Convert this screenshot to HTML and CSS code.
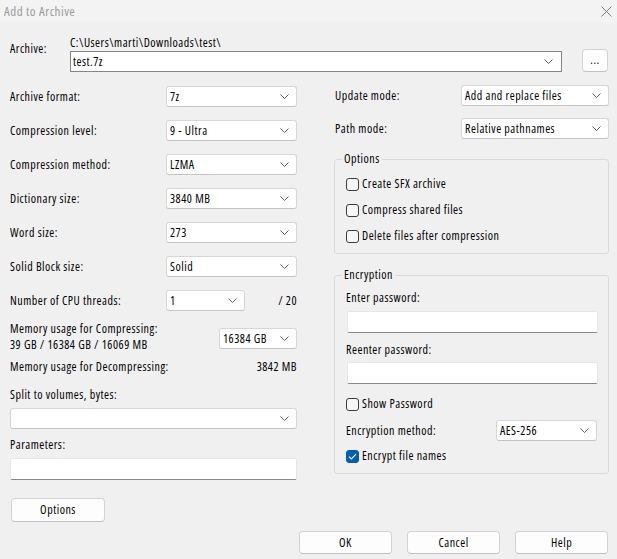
FILE: index.html
```html
<!DOCTYPE html>
<html>
<head>
<meta charset="utf-8">
<title>Add to Archive</title>
<link rel="stylesheet" href="styles.css">
</head>
<body>
<div class="titlebar">
  <span class="title">Add to Archive</span>
  <svg class="close" width="11" height="11" viewBox="0 0 11 11"><path d="M0.5 0.5 L10.5 10.5 M10.5 0.5 L0.5 10.5" stroke="#7a7a7a" stroke-width="1" fill="none"/></svg>
</div>

<div class="archive">
  <div class="archive-label">Archive:</div>
  <div class="archive-main">
    <div class="archive-path">C:\Users\marti\Downloads\test\</div>
    <div class="archive-row">
      <div class="combo combo-edit"><span>test.7z</span><svg class="chev" width="9" height="5" viewBox="0 0 9 5"><path d="M0.5 0.5 L4.5 4.5 L8.5 0.5" stroke="#5f5f5f" fill="none"/></svg></div>
      <div class="btn btn-browse">...</div>
    </div>
  </div>
</div>

<div class="columns">
  <div class="col-left">
    <div class="fields">
      <div class="field"><span>Archive format:</span><div class="combo w131"><span>7z</span><svg class="chev" width="9" height="5" viewBox="0 0 9 5"><path d="M0.5 0.5 L4.5 4.5 L8.5 0.5" stroke="#5f5f5f" fill="none"/></svg></div></div>
      <div class="field"><span>Compression level:</span><div class="combo w131"><span>9 - Ultra</span><svg class="chev" width="9" height="5" viewBox="0 0 9 5"><path d="M0.5 0.5 L4.5 4.5 L8.5 0.5" stroke="#5f5f5f" fill="none"/></svg></div></div>
      <div class="field"><span>Compression method:</span><div class="combo w131"><span>LZMA</span><svg class="chev" width="9" height="5" viewBox="0 0 9 5"><path d="M0.5 0.5 L4.5 4.5 L8.5 0.5" stroke="#5f5f5f" fill="none"/></svg></div></div>
      <div class="field"><span>Dictionary size:</span><div class="combo w131"><span>3840 MB</span><svg class="chev" width="9" height="5" viewBox="0 0 9 5"><path d="M0.5 0.5 L4.5 4.5 L8.5 0.5" stroke="#5f5f5f" fill="none"/></svg></div></div>
      <div class="field"><span>Word size:</span><div class="combo w131"><span>273</span><svg class="chev" width="9" height="5" viewBox="0 0 9 5"><path d="M0.5 0.5 L4.5 4.5 L8.5 0.5" stroke="#5f5f5f" fill="none"/></svg></div></div>
      <div class="field"><span>Solid Block size:</span><div class="combo w131"><span>Solid</span><svg class="chev" width="9" height="5" viewBox="0 0 9 5"><path d="M0.5 0.5 L4.5 4.5 L8.5 0.5" stroke="#5f5f5f" fill="none"/></svg></div></div>
      <div class="field"><span class="cpu-label">Number of CPU threads:</span><div class="combo w79"><span>1</span><svg class="chev" width="9" height="5" viewBox="0 0 9 5"><path d="M0.5 0.5 L4.5 4.5 L8.5 0.5" stroke="#5f5f5f" fill="none"/></svg></div><span class="cpu-total">/ 20</span></div>
    </div>

    <div class="mem">
      <div class="mem-text">Memory usage for Compressing:<br>39 GB / 16384 GB / 16069 MB</div>
      <div class="combo w78 mem-combo"><span>16384 GB</span><svg class="chev" width="9" height="5" viewBox="0 0 9 5"><path d="M0.5 0.5 L4.5 4.5 L8.5 0.5" stroke="#5f5f5f" fill="none"/></svg></div>
    </div>
    <div class="decomp"><span>Memory usage for Decompressing:</span><span>3842 MB</span></div>

    <div class="label split-label">Split to volumes, bytes:</div>
    <div class="combo full split-combo"><span></span><svg class="chev" width="9" height="5" viewBox="0 0 9 5"><path d="M0.5 0.5 L4.5 4.5 L8.5 0.5" stroke="#5f5f5f" fill="none"/></svg></div>

    <div class="label params-label">Parameters:</div>
    <div class="textbox params-input"></div>

    <div class="btn btn-options">Options</div>
  </div>

  <div class="col-right">
    <div class="rfield"><span>Update mode:</span><div class="combo w148"><span>Add and replace files</span><svg class="chev" width="9" height="5" viewBox="0 0 9 5"><path d="M0.5 0.5 L4.5 4.5 L8.5 0.5" stroke="#5f5f5f" fill="none"/></svg></div></div>
    <div class="rfield path-field"><span>Path mode:</span><div class="combo w148"><span>Relative pathnames</span><svg class="chev" width="9" height="5" viewBox="0 0 9 5"><path d="M0.5 0.5 L4.5 4.5 L8.5 0.5" stroke="#5f5f5f" fill="none"/></svg></div></div>

    <fieldset class="group group-options">
      <legend>Options</legend>
      <div class="group-body options-body">
        <div class="check"><span class="box"></span><span>Create SFX archive</span></div>
        <div class="check"><span class="box"></span><span>Compress shared files</span></div>
        <div class="check"><span class="box"></span><span>Delete files after compression</span></div>
      </div>
    </fieldset>

    <fieldset class="group group-enc">
      <legend>Encryption</legend>
      <div class="group-body enc-body">
        <div class="label">Enter password:</div>
        <div class="textbox pw-input pw1"></div>
        <div class="label reenter-label">Reenter password:</div>
        <div class="textbox pw-input pw2"></div>
        <div class="check show-pw"><span class="box"></span><span>Show Password</span></div>
        <div class="encm"><span>Encryption method:</span><div class="combo w101"><span>AES-256</span><svg class="chev" width="9" height="5" viewBox="0 0 9 5"><path d="M0.5 0.5 L4.5 4.5 L8.5 0.5" stroke="#5f5f5f" fill="none"/></svg></div></div>
        <div class="check enc-names"><span class="box checked"><svg width="9" height="7" viewBox="0 0 9 7"><path d="M1 3.6 L3.4 6 L8 1.2" stroke="#ffffff" stroke-width="1.1" fill="none"/></svg></span><span>Encrypt file names</span></div>
      </div>
    </fieldset>
  </div>
</div>

<div class="footer">
  <div class="btn btn-foot">OK</div>
  <div class="btn btn-foot">Cancel</div>
  <div class="btn btn-foot">Help</div>
</div>
</body>
</html>
```

FILE: styles.css
```css
* { box-sizing: border-box; }
html, body { margin: 0; padding: 0; }
body {
  width: 617px;
  height: 559px;
  overflow: hidden;
  background: #f0f0f0;
  color: #000;
  font-family: "Open Sans", "Liberation Sans", Arial, sans-serif;
  font-size: 12px;
  font-stretch: 75%;
  letter-spacing: 0.5px;
  line-height: 16px;
}

.titlebar {
  height: 22px;
  background: #f3f3f3;
  display: flex;
  align-items: center;
  justify-content: space-between;
  padding: 0 5px 0 4px;
}
.title { color: #9b9b9b; font-size: 13px; }
.close { display: block; }

.archive {
  display: flex;
  padding: 14px 9px 0 10px;
}
.archive-label { width: 60px; margin-top: 5px; line-height: 15px; }
.archive-main { flex: 1; }
.archive-path { line-height: 13px; }
.archive-row { display: flex; align-items: flex-end; }

.combo {
  height: 21px;
  background: #fff;
  border: 1px solid #d6d6d6;
  border-bottom-color: #c4c4c4;
  border-radius: 3px;
  display: flex;
  align-items: center;
  justify-content: space-between;
  padding: 0 7px 0 3px;
  white-space: nowrap;
}
.chev { display: block; flex: none; }
.combo-edit {
  width: 492px;
  border: 1px solid #858585;
  border-radius: 0;
  padding-left: 2px;
  padding-right: 8px;
}
.w131 { width: 131px; }
.w79 { width: 79px; }
.w78 { width: 78px; }
.w148 { width: 148px; }
.w101 { width: 101px; }
.full { width: 287px; }

.btn {
  background: #fdfdfd;
  border: 1px solid #d3d3d3;
  border-bottom-color: #c2c2c2;
  border-radius: 4px;
  display: flex;
  align-items: center;
  justify-content: center;
}
.btn-browse { width: 26px; height: 23px; margin-left: 20px; padding-bottom: 2px; }

.columns {
  display: flex;
  gap: 37px;
  padding: 13px 8px 0 10px;
}
.col-left { width: 287px; padding-top: 1px; }
.col-right { width: 275px; }

.fields { display: flex; flex-direction: column; gap: 13px; }
.field {
  height: 21px;
  display: flex;
  align-items: center;
  justify-content: space-between;
}
.cpu-label { width: 156px; }
.cpu-total { flex: 1; text-align: right; }

.mem {
  display: flex;
  justify-content: space-between;
  align-items: flex-start;
  margin-top: 10px;
}
.mem-text { line-height: 16px; }
.mem-combo { margin-top: 7px; }
.decomp {
  display: flex;
  justify-content: space-between;
  margin-top: 6px;
}

.label { line-height: 16px; }
.split-label { margin-top: 12px; }
.split-combo { margin-top: 5px; }
.params-label { margin-top: 8px; }

.textbox {
  height: 22px;
  background: #fff;
  border: 1px solid #e6e6e6;
  border-bottom-color: #8a8a8a;
  border-radius: 2px;
}
.params-input { margin-top: 5px; width: 287px; }

.btn-options { width: 94px; height: 24px; margin: 18px 0 0 1px; }

.rfield {
  height: 21px;
  display: flex;
  align-items: center;
  justify-content: space-between;
  padding-left: 1px;
}
.path-field { margin-top: 12px; }

.group {
  margin: 13px 0 0 0;
  padding: 0;
  border: 1px solid #dadada;
  border-radius: 3px;
  min-width: 0;
}
.group legend {
  padding: 0 2px;
  margin-left: 7px;
  line-height: 14px;
}
.group-enc { margin-top: 14px; }
.group-body { padding: 0 11px 9px 11px; }
.options-body {
  padding-top: 10px;
  display: flex;
  flex-direction: column;
  gap: 10px;
}
.enc-body { padding-top: 8px; }

.check {
  display: flex;
  align-items: center;
  height: 16px;
  gap: 3px;
}
.box {
  width: 13px;
  height: 13px;
  border: 1px solid #3c3c3c;
  border-radius: 3px;
  background: #f6f6f6;
  flex: none;
  display: flex;
  align-items: center;
  justify-content: center;
}
.box.checked { background: #005fb8; border-color: #005fb8; }
.box svg { display: block; }

.pw-input { width: 251px; margin-left: 1px; }
.pw1 { margin-top: 5px; }
.reenter-label { margin-top: 9px; }
.pw2 { margin-top: 4px; }
.show-pw { margin-top: 12px; }
.encm {
  display: flex;
  align-items: center;
  justify-content: space-between;
  height: 21px;
  margin-top: 8px;
}
.enc-names { margin-top: 7px; }

.footer {
  display: flex;
  justify-content: flex-end;
  gap: 15px;
  padding: 9px 9px 0 0;
}
.btn-foot { width: 93px; height: 23px; }
```
